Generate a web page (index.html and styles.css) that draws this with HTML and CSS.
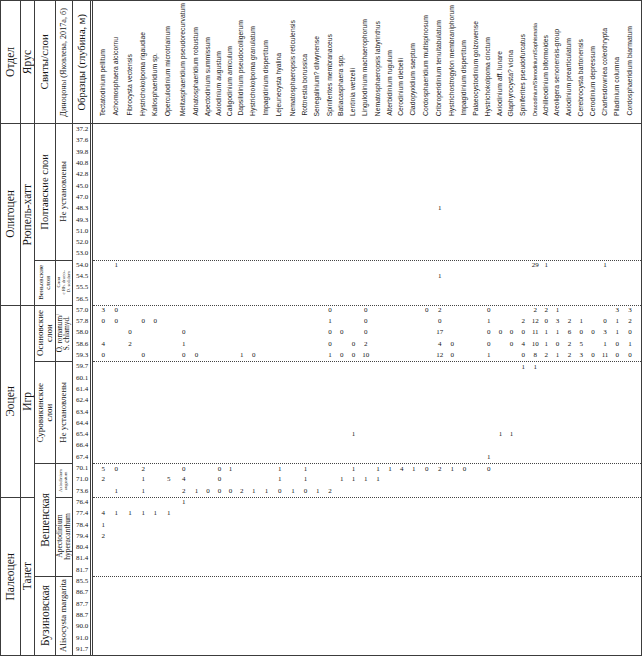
FILE: index.html
```html
<!DOCTYPE html>
<html lang="ru">
<head>
<meta charset="utf-8">
<title>Диноцисты</title>
<link rel="stylesheet" href="styles.css">
</head>
<body>
<div class="table">
  <div class="head">
    <div class="hc hA"><span class="vt t-big">Отдел</span></div>
    <div class="hc hB"><span class="vt t-big">Ярус</span></div>
    <div class="hc hC"><span class="vt t-mid">Свиты/слои</span></div>
    <div class="hc hD"><span class="vt t-dino">Диноцоны (Яковлева, 2017а, б)</span></div>
    <div class="hc hE"><span class="vt t-obr">Образцы (глубина, м)</span></div>
    <div class="species">
      <span class="sp">Tectatodinium pellitum</span>
      <span class="sp">Achomosphaera alcicornu</span>
      <span class="sp">Fibrocysta vectensis</span>
      <span class="sp">Hystrichokolpoma rigaudiae</span>
      <span class="sp">Kallosphaeridium sp.</span>
      <span class="sp">Operculodinium microtriainum</span>
      <span class="sp">Melitasphaeridium pseudorecurvatum</span>
      <span class="sp">Adnatosphaeridium robustum</span>
      <span class="sp">Apectodinium summissum</span>
      <span class="sp">Axiodinium augustum</span>
      <span class="sp">Caligodinium amiculum</span>
      <span class="sp">Dapsilidinium pseudocolligerum</span>
      <span class="sp">Hystrichokolpoma granulatum</span>
      <span class="sp">Impagidinium dispertitum</span>
      <span class="sp">Lejeunecysta hyalina</span>
      <span class="sp">Nematosphaeropsis reticulensis</span>
      <span class="sp">Rottnestia borussica</span>
      <span class="sp">Senegalinium? dilwynense</span>
      <span class="sp">Spiniferites membranaceus</span>
      <span class="sp">Batiacasphaera spp.</span>
      <span class="sp">Lentinia wetzelii</span>
      <span class="sp">Lingulodinium machaerophorum</span>
      <span class="sp">Nematosphaeropsis labyrinthus</span>
      <span class="sp">Alterbidinium rugulum</span>
      <span class="sp">Cerodinium diebelii</span>
      <span class="sp">Cladopyxidium saeptum</span>
      <span class="sp">Cordosphaeridium multispinosum</span>
      <span class="sp">Cribroperidinium tenuitabulatum</span>
      <span class="sp">Hystrichostrogylon membraniphorum</span>
      <span class="sp">Impagidinium dispertitum</span>
      <span class="sp">Palaeocystodinium golzowense</span>
      <span class="sp">Hystrichokolpoma cinctum</span>
      <span class="sp">Axiodinium aff. lunare</span>
      <span class="sp">Glaphyrocysta? vicina</span>
      <span class="sp">Spiniferites pseudofurcatus</span>
      <span class="sp sp-small">Dracodinium/Stenodinium/Sophismatia</span>
      <span class="sp">Achilleodinium biformoides</span>
      <span class="sp">Areoligera senonensis-group</span>
      <span class="sp">Axiodinium prearticulatum</span>
      <span class="sp">Cerebrocysta bartonensis</span>
      <span class="sp">Cerodinium depressum</span>
      <span class="sp">Charlesdowniea coleothrypta</span>
      <span class="sp">Piladinium columna</span>
      <span class="sp">Cordosphaeridium biarmatum</span>
    </div>
  </div>

  <div class="body">
    <div class="strat">
      <div class="cell first sa1"><span class="vt t-big">Олигоцен</span></div>
      <div class="cell sa2"><span class="vt t-big">Эоцен</span></div>
      <div class="cell sa3"><span class="vt t-big">Палеоцен</span></div>

      <div class="cell first sb1"><span class="vt t-big">Рюпель-хатт</span></div>
      <div class="cell sb2"><span class="vt t-big">Игр</span></div>
      <div class="cell sb3"><span class="vt t-big">Танет</span></div>

      <div class="cell first sc1"><span class="vt t-c">Полтавские слои</span></div>
      <div class="cell sc2"><span class="vt t-tiny">Веньовские<br>слои</span></div>
      <div class="cell sc3"><span class="vt t-two">Осиновские<br>слои</span></div>
      <div class="cell sc4"><span class="vt t-two">Суровикинские<br>слои</span></div>
      <div class="cell sc5"><span class="vt t-big">Вешенская</span></div>
      <div class="cell sc6"><span class="vt t-big">Бузиновская</span></div>

      <div class="cell first sd1"><span class="vt t-d">Не установлены</span></div>
      <div class="cell sd2"><span class="vt t-micro">Слои<br>c Rh. draco–<br>D. solidum</span></div>
      <div class="cell sd3"><span class="vt t-rom">O. romanum/<br>S. chlamyd.</span></div>
      <div class="cell sd4"><span class="vt t-d">Не установлены</span></div>
      <div class="cell sd5"><span class="vt t-micro">Axiodinium<br>augustum</span></div>
      <div class="cell sd6"><span class="vt t-apec">Apectodinium<br>hyperacanthum</span></div>
      <div class="cell sd7"><span class="vt t-d">Alisocysta margarita</span></div>
    </div>

    <div class="samples">
      <div class="row"><div class="depth">37.2</div><div class="vals"></div></div>
      <div class="row"><div class="depth">37.6</div><div class="vals"></div></div>
      <div class="row"><div class="depth">39.8</div><div class="vals"></div></div>
      <div class="row"><div class="depth">40.8</div><div class="vals"></div></div>
      <div class="row"><div class="depth">42.8</div><div class="vals"></div></div>
      <div class="row"><div class="depth">45.0</div><div class="vals"></div></div>
      <div class="row"><div class="depth">47.0</div><div class="vals"></div></div>
      <div class="row"><div class="depth">48.3</div><div class="vals"><span class="c28">1</span></div></div>
      <div class="row"><div class="depth">49.3</div><div class="vals"></div></div>
      <div class="row"><div class="depth">51.0</div><div class="vals"></div></div>
      <div class="row"><div class="depth">52.0</div><div class="vals"></div></div>
      <div class="row"><div class="depth">53.0</div><div class="vals"></div></div>
      <div class="row sep"><div class="depth">54.0</div><div class="vals"><span class="c2">1</span><span class="c36">29</span><span class="c37">1</span><span class="c42">1</span></div></div>
      <div class="row"><div class="depth">54.5</div><div class="vals"><span class="c28">1</span></div></div>
      <div class="row"><div class="depth">55.5</div><div class="vals"></div></div>
      <div class="row"><div class="depth">56.5</div><div class="vals"></div></div>
      <div class="row sep"><div class="depth">57.0</div><div class="vals"><span class="c1">3</span><span class="c2">0</span><span class="c19">0</span><span class="c22">0</span><span class="c27">0</span><span class="c28">2</span><span class="c32">0</span><span class="c36">2</span><span class="c37">2</span><span class="c38">1</span><span class="c43">3</span><span class="c44">3</span></div></div>
      <div class="row"><div class="depth">57.8</div><div class="vals"><span class="c1">0</span><span class="c2">0</span><span class="c4">0</span><span class="c5">0</span><span class="c19">1</span><span class="c22">0</span><span class="c28">0</span><span class="c32">1</span><span class="c35">2</span><span class="c36">12</span><span class="c37">0</span><span class="c38">3</span><span class="c39">2</span><span class="c40">1</span><span class="c42">0</span><span class="c43">1</span><span class="c44">2</span></div></div>
      <div class="row"><div class="depth">58.0</div><div class="vals"><span class="c3">0</span><span class="c7">0</span><span class="c19">0</span><span class="c20">0</span><span class="c22">0</span><span class="c28">17</span><span class="c32">0</span><span class="c33">0</span><span class="c34">0</span><span class="c35">0</span><span class="c36">11</span><span class="c37">1</span><span class="c38">1</span><span class="c39">6</span><span class="c40">0</span><span class="c41">0</span><span class="c42">3</span><span class="c43">1</span><span class="c44">0</span></div></div>
      <div class="row"><div class="depth">58.6</div><div class="vals"><span class="c1">4</span><span class="c3">2</span><span class="c7">1</span><span class="c19">0</span><span class="c21">0</span><span class="c22">2</span><span class="c28">4</span><span class="c29">0</span><span class="c32">0</span><span class="c34">0</span><span class="c35">4</span><span class="c36">10</span><span class="c37">1</span><span class="c38">0</span><span class="c39">2</span><span class="c40">5</span><span class="c42">1</span><span class="c43">0</span><span class="c44">1</span></div></div>
      <div class="row"><div class="depth">59.3</div><div class="vals"><span class="c1">0</span><span class="c4">0</span><span class="c7">0</span><span class="c8">0</span><span class="c12">1</span><span class="c13">0</span><span class="c19">1</span><span class="c20">0</span><span class="c21">0</span><span class="c22">10</span><span class="c28">12</span><span class="c29">0</span><span class="c32">1</span><span class="c35">0</span><span class="c36">8</span><span class="c37">2</span><span class="c38">1</span><span class="c39">2</span><span class="c40">3</span><span class="c41">0</span><span class="c42">11</span><span class="c43">0</span><span class="c44">0</span></div></div>
      <div class="row sep"><div class="depth">59.7</div><div class="vals"><span class="c35">1</span><span class="c36">1</span></div></div>
      <div class="row"><div class="depth">60.1</div><div class="vals"></div></div>
      <div class="row"><div class="depth">61.4</div><div class="vals"></div></div>
      <div class="row"><div class="depth">62.4</div><div class="vals"></div></div>
      <div class="row"><div class="depth">63.4</div><div class="vals"></div></div>
      <div class="row"><div class="depth">64.4</div><div class="vals"></div></div>
      <div class="row"><div class="depth">65.4</div><div class="vals"><span class="c21">1</span><span class="c33">1</span><span class="c34">1</span></div></div>
      <div class="row"><div class="depth">66.4</div><div class="vals"></div></div>
      <div class="row"><div class="depth">67.4</div><div class="vals"><span class="c32">1</span></div></div>
      <div class="row sep"><div class="depth">70.1</div><div class="vals"><span class="c1">5</span><span class="c2">0</span><span class="c4">2</span><span class="c7">0</span><span class="c10">0</span><span class="c11">1</span><span class="c15">1</span><span class="c17">1</span><span class="c21">1</span><span class="c23">1</span><span class="c24">1</span><span class="c25">4</span><span class="c26">1</span><span class="c27">0</span><span class="c28">2</span><span class="c29">1</span><span class="c30">0</span><span class="c32">0</span></div></div>
      <div class="row"><div class="depth">71.0</div><div class="vals"><span class="c1">2</span><span class="c4">1</span><span class="c6">5</span><span class="c7">4</span><span class="c10">0</span><span class="c15">1</span><span class="c17">1</span><span class="c20">1</span><span class="c21">1</span><span class="c22">1</span><span class="c23">1</span></div></div>
      <div class="row"><div class="depth">73.6</div><div class="vals"><span class="c2">1</span><span class="c4">1</span><span class="c7">2</span><span class="c8">1</span><span class="c9">0</span><span class="c10">0</span><span class="c11">0</span><span class="c12">2</span><span class="c13">1</span><span class="c14">1</span><span class="c15">0</span><span class="c16">1</span><span class="c17">0</span><span class="c18">1</span><span class="c19">2</span></div></div>
      <div class="row sep"><div class="depth">76.4</div><div class="vals"><span class="c7">1</span></div></div>
      <div class="row"><div class="depth">77.4</div><div class="vals"><span class="c1">4</span><span class="c2">1</span><span class="c3">1</span><span class="c4">1</span><span class="c5">1</span><span class="c6">1</span></div></div>
      <div class="row"><div class="depth">78.4</div><div class="vals"><span class="c1">1</span></div></div>
      <div class="row"><div class="depth">79.4</div><div class="vals"><span class="c1">2</span></div></div>
      <div class="row"><div class="depth">80.4</div><div class="vals"></div></div>
      <div class="row"><div class="depth">81.4</div><div class="vals"></div></div>
      <div class="row"><div class="depth">81.7</div><div class="vals"></div></div>
      <div class="row sep"><div class="depth">85.5</div><div class="vals"></div></div>
      <div class="row"><div class="depth">86.7</div><div class="vals"></div></div>
      <div class="row"><div class="depth">87.7</div><div class="vals"></div></div>
      <div class="row"><div class="depth">88.7</div><div class="vals"></div></div>
      <div class="row"><div class="depth">90.0</div><div class="vals"></div></div>
      <div class="row"><div class="depth">91.0</div><div class="vals"></div></div>
      <div class="row"><div class="depth">91.7</div><div class="vals"></div></div>
    </div>
  </div>
</div>
</body>
</html>
```

FILE: styles.css
```css
* { box-sizing: border-box; }

:root {
  --line: #3c3c3c;
  --cols: 12.5px 13.5px 14px 12.5px 11.5px 15.5px 14.5px 11px 12px 11px 11px 11.5px 12.5px 13px 13.5px 13px 12px 12.5px 12px 11.5px 12px 12.5px 12px 12px 11.5px 12.5px 13.5px 12.5px 12.5px 12px 12px 12.5px 11px 11px 12.5px 11.5px 10.5px 12px 12px 11.5px 12px 12px 12.5px 13px;
  --rowh: 11.3px;
}

body {
  margin: 0;
  background: #fff;
  color: #151515;
  font-family: "Liberation Serif", "Times New Roman", serif;
}

.table {
  width: 642px;
  border: 1px solid var(--line);
}

/* ---------- header ---------- */
.head {
  display: flex;
  height: 123px;
  border-bottom: 1px solid var(--line);
}

.hc {
  display: flex;
  align-items: center;
  justify-content: center;
  border-right: 1px solid var(--line);
  overflow: hidden;
}
.hA { width: 20px; }
.hB { width: 14px; }
.hC { width: 21px; }
.hD { width: 17px; }
.hE { width: 20px; border-right: 3px double var(--line); }

.species {
  flex: 1;
  display: grid;
  grid-template-columns: var(--cols);
  align-items: end;
  padding: 0 0 7px 4px;
}

.sp {
  justify-self: center;
  writing-mode: vertical-rl;
  transform: rotate(180deg);
  white-space: nowrap;
  font-family: "Liberation Sans", Arial, sans-serif;
  font-size: 6.8px;
  line-height: 1;
  color: #222;
}
.sp-small { font-size: 5.4px; }

/* vertical text */
.vt {
  writing-mode: vertical-rl;
  transform: rotate(180deg);
  white-space: nowrap;
  text-align: center;
  line-height: 1.05;
}
.t-big  { font-size: 11.5px; }
.t-mid  { font-size: 11px; }
.t-dino { font-size: 8.2px; }
.t-obr  { font-size: 10.5px; }
.t-c    { font-size: 10.5px; }
.t-two  { font-size: 9px; line-height: 1.05; }
.t-tiny { font-size: 7px; }
.t-micro{ font-size: 4.8px; line-height: 1; }
.t-rom  { font-size: 7.2px; line-height: 1; }
.t-apec { font-size: 7.6px; line-height: 1; }
.t-d    { font-size: 8.8px; }

/* ---------- body ---------- */
.body { display: flex; }

.strat {
  width: 72px;
  display: grid;
  grid-template-columns: 20px 14px 21px 17px;
  grid-template-rows: repeat(47, var(--rowh));
}

.cell {
  display: flex;
  align-items: center;
  justify-content: center;
  border-right: 1px solid var(--line);
  border-top: 1px solid var(--line);
  overflow: hidden;
}
.cell.first { border-top: none; }

.sa1 { grid-column: 1; grid-row: 1 / 17; }
.sa2 { grid-column: 1; grid-row: 17 / 34; }
.sa3 { grid-column: 1; grid-row: 34 / 48; }
.sb1 { grid-column: 2; grid-row: 1 / 17; }
.sb2 { grid-column: 2; grid-row: 17 / 34; }
.sb3 { grid-column: 2; grid-row: 34 / 48; }
.sc1 { grid-column: 3; grid-row: 1 / 13; }
.sc2 { grid-column: 3; grid-row: 13 / 17; }
.sc3 { grid-column: 3; grid-row: 17 / 22; }
.sc4 { grid-column: 3; grid-row: 22 / 31; }
.sc5 { grid-column: 3; grid-row: 31 / 41; }
.sc6 { grid-column: 3; grid-row: 41 / 48; }
.sd1 { grid-column: 4; grid-row: 1 / 13; }
.sd2 { grid-column: 4; grid-row: 13 / 17; }
.sd3 { grid-column: 4; grid-row: 17 / 22; }
.sd4 { grid-column: 4; grid-row: 22 / 31; }
.sd5 { grid-column: 4; grid-row: 31 / 34; }
.sd6 { grid-column: 4; grid-row: 34 / 41; }
.sd7 { grid-column: 4; grid-row: 41 / 48; }

.samples { flex: 1; }

.row {
  display: flex;
  height: var(--rowh);
}

.depth {
  width: 20px;
  border-right: 3px double var(--line);
  display: flex;
  align-items: center;
  padding-left: 3px;
  font-size: 7px;
  line-height: 1;
}

.vals {
  flex: 1;
  display: grid;
  grid-template-columns: var(--cols);
  align-items: center;
  padding-left: 4px;
  font-size: 7px;
  line-height: 1;
}
.vals span { grid-row: 1; text-align: center; }

.row.sep .vals { border-top: 1px dotted #444; }

.c1{grid-column:1}.c2{grid-column:2}.c3{grid-column:3}.c4{grid-column:4}
.c5{grid-column:5}.c6{grid-column:6}.c7{grid-column:7}.c8{grid-column:8}
.c9{grid-column:9}.c10{grid-column:10}.c11{grid-column:11}.c12{grid-column:12}
.c13{grid-column:13}.c14{grid-column:14}.c15{grid-column:15}.c16{grid-column:16}
.c17{grid-column:17}.c18{grid-column:18}.c19{grid-column:19}.c20{grid-column:20}
.c21{grid-column:21}.c22{grid-column:22}.c23{grid-column:23}.c24{grid-column:24}
.c25{grid-column:25}.c26{grid-column:26}.c27{grid-column:27}.c28{grid-column:28}
.c29{grid-column:29}.c30{grid-column:30}.c31{grid-column:31}.c32{grid-column:32}
.c33{grid-column:33}.c34{grid-column:34}.c35{grid-column:35}.c36{grid-column:36}
.c37{grid-column:37}.c38{grid-column:38}.c39{grid-column:39}.c40{grid-column:40}
.c41{grid-column:41}.c42{grid-column:42}.c43{grid-column:43}.c44{grid-column:44}
```
